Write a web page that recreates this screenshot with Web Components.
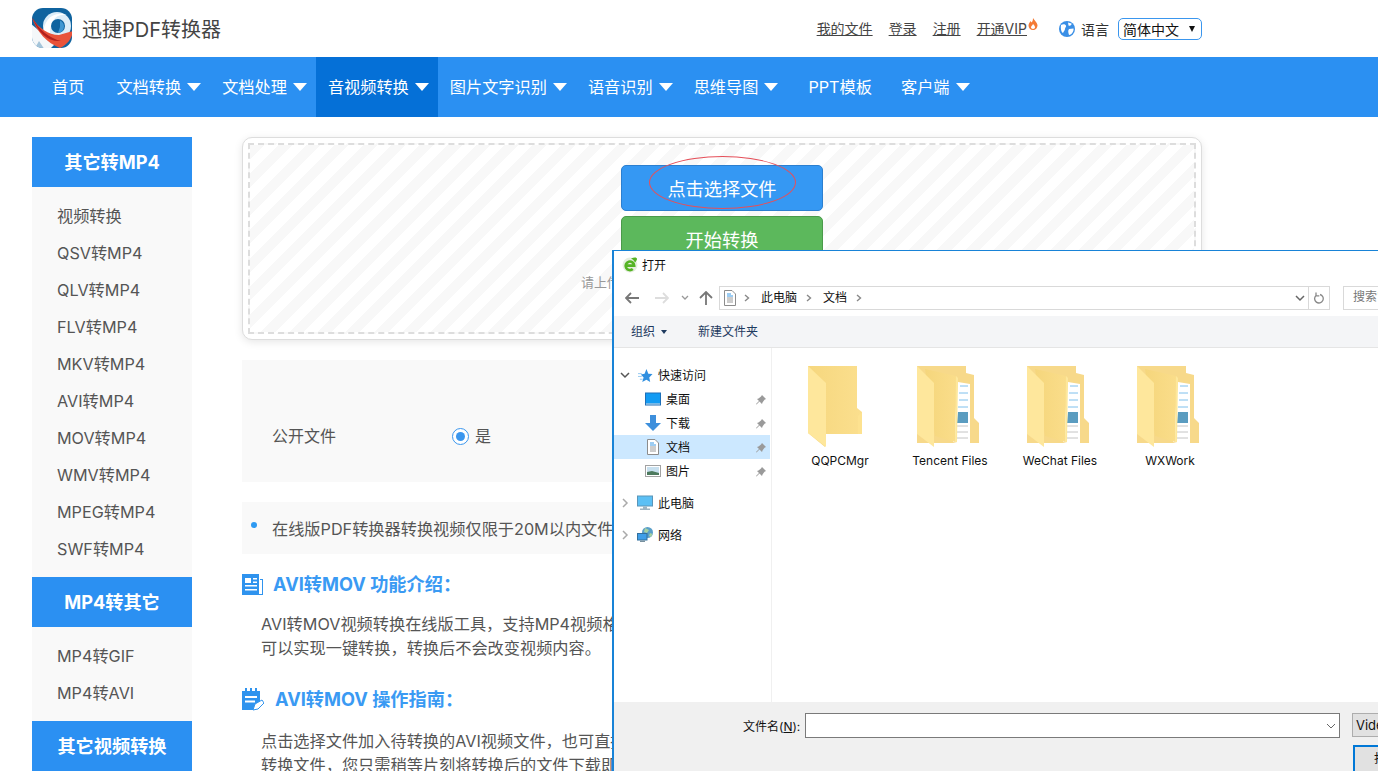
<!DOCTYPE html>
<html lang="zh">
<head>
<meta charset="UTF-8">
<title>AVI转MOV - 迅捷PDF转换器</title>
<style>
  html, body { margin: 0; height: 771px; overflow: hidden; background: #fff; }
  body { font-family: Inter, "Noto Sans CJK SC", sans-serif; position: relative; }
  page-body { margin-top: 20px; }
</style>
</head>
<body>

<site-header></site-header>

<site-nav>
  <nav-item class="home">首页</nav-item>
  <nav-item caret>文档转换</nav-item>
  <nav-item caret>文档处理</nav-item>
  <nav-item caret active>音视频转换</nav-item>
  <nav-item caret>图片文字识别</nav-item>
  <nav-item caret>语音识别</nav-item>
  <nav-item caret>思维导图</nav-item>
  <nav-item gap>PPT模板</nav-item>
  <nav-item caret>客户端</nav-item>
</site-nav>

<page-body>
  <side-menu slot="side">
    <side-group heading="其它转MP4" items="视频转换,QSV转MP4,QLV转MP4,FLV转MP4,MKV转MP4,AVI转MP4,MOV转MP4,WMV转MP4,MPEG转MP4,SWF转MP4"></side-group>
    <side-group heading="MP4转其它" items="MP4转GIF,MP4转AVI"></side-group>
    <side-group heading="其它视频转换" items="视频压缩"></side-group>
  </side-menu>

  <upload-box></upload-box>
  <option-panel></option-panel>
  <note-panel>在线版PDF转换器转换视频仅限于20M以内文件，</note-panel>

  <info-section icon="news" heading="AVI转MOV 功能介绍：">
    <span>AVI转MOV视频转换在线版工具，支持MP4视频格式</span>
    <span>可以实现一键转换，转换后不会改变视频内容。</span>
  </info-section>
  <info-section icon="note" heading="AVI转MOV 操作指南：">
    <span>点击选择文件加入待转换的AVI视频文件，也可直接</span>
    <span>转换文件，您只需稍等片刻将转换后的文件下载即可</span>
  </info-section>
</page-body>

<file-dialog>
  <tree-item chevron="down" icon="star" pad="25">快速访问</tree-item>
  <tree-item icon="desktop" indent pinned>桌面</tree-item>
  <tree-item icon="download" indent pinned>下载</tree-item>
  <tree-item icon="doc" indent pinned selected>文档</tree-item>
  <tree-item icon="picture" indent pinned>图片</tree-item>
  <tree-item chevron="right" icon="pc" class="far">此电脑</tree-item>
  <tree-item chevron="right" icon="network" class="far">网络</tree-item>
</file-dialog>

<script>
  // all the little pictures live here, <ui-icon name="..."> picks one
  const ICONS = {
    logo: `<svg viewBox="0 0 42 42"><defs><clipPath id="c"><rect x="1" y="0" width="40" height="40" rx="11"/></clipPath></defs>
      <g clip-path="url(#c)"><rect width="42" height="42" fill="#0f639f"/>
      <path d="M0 16 24 36 18 42H0Z" fill="#f4f7f9"/>
      <path d="M8 33 14 42H3Z" fill="#0f639f" opacity=".35"/>
      <circle cx="26" cy="18" r="14" fill="#dcedf8"/>
      <path d="M12 28C12 12 22 2 36 7 24 5 18 14 19 30Z" fill="#fff"/>
      <circle cx="27" cy="18" r="7" fill="#0f639f"/>
      <path d="M29 12.500a7 7 0 0 1 4 6 7 7 0 0 1-6 6.500l2-6Z" fill="#3f97d2"/>
      <path d="M1 10C8 20 17 27 28 27L42 23C41 31 36 37 29 40 16 35 6 24 1 10Z" fill="#e9533a"/>
      <path d="M1 9C8 22 18 30 30 33 17 34 7 25 1 9Z" fill="#b3211e"/></g></svg>`,
    fire: `<svg viewBox="0 0 10 12"><path d="M5 0C6 2 9 4 9.500 7 9.500 10 7.500 12 5 12S.5 10 .5 7.500C.5 5.500 2 4.500 2.500 3L3.500 4.500C4.500 3.500 5 2 5 0Z" fill="#f47a35"/><path d="M5 6C6 7 7 8 7 9.300 7 10.500 6 11 5 11S3 10.500 3 9.300C3 8 4.500 7.500 5 6Z" fill="#fff"/></svg>`,
    globe: `<svg viewBox="0 0 16 16"><circle cx="8" cy="8" r="8" fill="#3a8fe6"/><path d="M2 4C4 3 6 3 7 4.500 7.500 6 6 6.500 6 8 6 9.500 4.500 10.500 4 12 2 11 1.500 7 2 4ZM9 1.500 12.500 2.500C13 4 11 5.500 9.500 4.500ZM10 8 14.500 7.500C15 10 13 13.500 10 14 9.500 12 8.500 10 10 8Z" fill="#fff"/></svg>`,
    news: `<svg viewBox="0 0 21 21"><path d="M0 0H17V21H0Z" fill="#2f93ee"/><path d="M3 4H9V9H3ZM11 4H15V5.500H11ZM11 7.500H15V9H11ZM3 11H15V12.500H3ZM3 15H15V16.500H3Z" fill="#fff"/><path d="M18 5H21V21H13V20H20V6H18Z" fill="#2f93ee"/></svg>`,
    note: `<svg viewBox="0 0 22 23"><path d="M0 3H3V0H5V3H8V0H10V3H13V0H15V3H18V13L11 22H0Z" fill="#2f93ee"/><path d="M3 8H15V10H3ZM3 12.500H13V14.500H3Z" fill="#fff"/><path d="M11 22 13 16 20 12 22 15 16 21Z" fill="#fff" stroke="#2f93ee" stroke-width="1"/></svg>`,
    ie: `<svg viewBox="0 0 16 16"><circle cx="8" cy="8" r="7.500" fill="#e6eee0"/><path d="M3.800 8.600H12.200A4.300 4.300 0 1 0 10.800 12" fill="none" stroke="#55b324" stroke-width="2.600"/><path d="M9 1.500C12 0 15 0 15 2 15 3 14 4.500 13 5.500 12.500 4 11 2.500 9 1.500Z" fill="#55b324"/></svg>`,
    star: `<svg viewBox="0 0 16 16"><path d="M9 1 11 6 15.500 6.500 12 10 13 15 9 12.500 4.500 15 6 10 3 7 7 6Z" fill="#2f8fe0"/><path d="M0 6H4M0 9H4M2 12H5" stroke="#8fc6ef" stroke-width="1"/></svg>`,
    desktop: `<svg viewBox="0 0 16 13"><rect width="16" height="13" fill="#1d6fb8"/><rect x="1" y="1" width="14" height="10" fill="#129bf3"/><path d="M1 11H15V12H1Z" fill="#d7ecfb"/></svg>`,
    download: `<svg viewBox="0 0 16 16"><path d="M5 0H11V8H16L8 16 0 8H5Z" fill="#3d8fdc"/></svg>`,
    doc: `<svg viewBox="0 0 12 16"><path d="M.5.500H8L11.500 4V15.500H.5Z" fill="#fff" stroke="#8c8c8c"/><path d="M3 4H7M3 6H9" stroke="#3a9ae6"/><path d="M3 8H9M3 10H9M3 12H9" stroke="#9a9a9a"/></svg>`,
    picture: `<svg viewBox="0 0 16 12"><rect x=".5" y=".5" width="15" height="11" fill="#fff" stroke="#a2a2a2"/><rect x="2" y="2" width="12" height="8" fill="#c8e0ef"/><path d="M2 7 7 6 14 8V10H2Z" fill="#4d7a5e"/></svg>`,
    pc: `<svg viewBox="0 0 16 15"><rect x=".5" y=".5" width="15" height="10" fill="#5cc0f5" stroke="#5a95b8"/><path d="M6 11H10V13H6ZM3 13H13V14.500H3Z" fill="#9eb4c2"/></svg>`,
    network: `<svg viewBox="0 0 16 16"><circle cx="10.500" cy="5.500" r="5.500" fill="#5a9fc9"/><path d="M8 1 12 3 10 6 7 5ZM13 6 15.500 7 14 10 12 9Z" fill="#a6d2a2"/><rect x=".5" y="6.500" width="9.500" height="6.500" fill="#3f9ee8" stroke="#33709e"/><path d="M3 13.500H8V15H3Z" fill="#78909e"/></svg>`,
    pin: `<svg viewBox="0 0 10 10"><path d="M6 0 10 4 8.500 4.800 6.500 7.500 6 9 3.500 6.500.5 9.500 0 9 3 6 1 4 2.500 3.500 5 1.500Z" fill="#9a9a9a"/></svg>`,
    folder: `<svg viewBox="0 0 56 84"><defs>
        <linearGradient id="b" x1="0" x2="1"><stop offset="0" stop-color="#f6d77e"/><stop offset="1" stop-color="#fbdf8e"/></linearGradient></defs>
      <path d="M0 0H49V42L54 46V68H17V81L0 67Z" fill="url(#b)"/>
      <path d="M0 0 18 17V81L0 67Z" fill="#fee79c"/>
      <path d="M54 46V68H50V50Z" fill="#fde290"/></svg>`,
    files: `<svg viewBox="0 0 62 84"><defs>
        <linearGradient id="f" x1="0" x2="1"><stop offset="0" stop-color="#f5d67c"/><stop offset="1" stop-color="#fadd8a"/></linearGradient></defs>
      <path d="M0 0H49V7L57 9V52L62 57V77H0Z" fill="#f7d98a"/>
      <path d="M41 16 53 18V80L36 76Z" fill="#fff"/>
      <path d="M43 20H51M42 27H51M42 34H51M41 41H51" stroke="#7fc0ec" stroke-width="1"/>
      <path d="M40 60H51M39 66H51M39 72H51" stroke="#c4c4c4" stroke-width="1"/>
      <path d="M41 46H51V57H40Z" fill="#5a9cc0"/>
      <path d="M8 3 39 10 38 76 18 70Z" fill="url(#f)"/>
      <path d="M38 76 39 10 41 12 40 76Z" fill="#fde79b"/>
      <path d="M0 0 17 17V81L0 68Z" fill="#fee79c"/></svg>`
  };

  class UiIcon extends HTMLElement {
    connectedCallback() {
      this.attachShadow({ mode: 'open' });
      this.shadowRoot.innerHTML = `<style>
        :host { display: inline-flex; flex: none; }
        svg { display: block; width: 100%; height: 100%; }
      </style>${ICONS[this.getAttribute('name')] || ''}`;
    }
  }

  class SiteHeader extends HTMLElement {
    constructor() {
      super();
      this.attachShadow({ mode: 'open' });
      this.shadowRoot.innerHTML = `<style>
        :host { display: flex; align-items: center; height: 57px; width: 1202px; padding-left: 31px; box-sizing: border-box; color: #333; }
        .logo { width: 42px; height: 42px; margin-right: 9px; }
        .name { font-size: 20px; color: #444; }
        .links { margin-left: auto; display: flex; align-items: center; font-size: 14px; }
        a { color: #444; text-decoration: underline; margin-right: 16px; line-height: 20px; }
        a.vip { margin-right: 0; }
        .fire { width: 10px; height: 12px; margin: -10px 21px 0 1px; }
        .globe { width: 16px; height: 16px; margin-right: 6px; }
        .lang { margin-right: 9px; }
        .select { width: 84px; height: 22px; box-sizing: border-box; border: 1px solid #3a96ee; border-radius: 5px; color: #111;
          display: flex; align-items: center; padding-left: 4px; position: relative; }
        .select i { width: 0; height: 0; border: 3.5px solid transparent; border-top: 6px solid #111; border-bottom: 0; position: absolute; right: 6px; top: 7px; }
      </style>
      <ui-icon class="logo" name="logo"></ui-icon>
      <span class="name">迅捷PDF转换器</span>
      <div class="links">
        <a>我的文件</a><a>登录</a><a>注册</a><a class="vip">开通VIP</a>
        <ui-icon class="fire" name="fire"></ui-icon>
        <ui-icon class="globe" name="globe"></ui-icon>
        <span class="lang">语言</span>
        <div class="select">简体中文<i></i></div>
      </div>`;
    }
  }

  class SiteNav extends HTMLElement {
    constructor() {
      super();
      this.attachShadow({ mode: 'open' });
      this.shadowRoot.innerHTML = `<style>
        :host { display: flex; height: 60px; background: #2b90f2; padding-left: 40px; }
      </style><slot></slot>`;
    }
  }

  class NavItem extends HTMLElement {
    constructor() {
      super();
      this.attachShadow({ mode: 'open' });
      this.shadowRoot.innerHTML = `<style>
        :host { display: flex; align-items: center; padding: 0 20px 2px 12px; color: #fff; font-size: 16.200px; }
        :host([caret]) { padding-right: 9px; }
        :host([active]) { background: #0570d7; }
        :host([gap]) { margin-left: 9px; padding-right: 17px; }
        i { display: none; width: 0; height: 0; margin: 2px 0 0 6px; border: 7.5px solid transparent; border-top: 8px solid #fff; border-bottom: 0; }
        :host([caret]) i { display: block; }
      </style><slot></slot><i></i>`;
    }
  }

  class PageBody extends HTMLElement {
    constructor() {
      super();
      this.attachShadow({ mode: 'open' });
      this.shadowRoot.innerHTML = `<style>
        :host { display: grid; grid-template-columns: 160px 960px; column-gap: 50px; padding-left: 32px; align-items: start; }
        .main { display: flex; flex-direction: column; min-width: 0; }
      </style>
      <slot name="side"></slot>
      <div class="main"><slot></slot></div>`;
    }
  }

  class SideMenu extends HTMLElement {
    constructor() {
      super();
      this.attachShadow({ mode: 'open' });
      this.shadowRoot.innerHTML = `<style>:host { display: block; }</style><slot></slot>`;
    }
  }

  class SideGroup extends HTMLElement {
    connectedCallback() {
      const items = this.getAttribute('items').split(',').map(t => `<li>${t}</li>`).join('');
      this.attachShadow({ mode: 'open' });
      this.shadowRoot.innerHTML = `<style>
        :host { display: block; }
        h3 { margin: 0; height: 50px; line-height: 50px; text-align: center; background: #2b90f2; color: #fff; font-size: 18.200px; font-weight: 700; }
        ul { margin: 0; padding: 11px 0 9px; list-style: none; background: #f9f9f9; }
        li { height: 37px; line-height: 37px; padding-left: 25px; font-size: 16.200px; color: #555; }
      </style><h3>${this.getAttribute('heading')}</h3><ul>${items}</ul>`;
    }
  }

  class UploadBox extends HTMLElement {
    constructor() {
      super();
      this.attachShadow({ mode: 'open' });
      this.shadowRoot.innerHTML = `<style>
        :host { display: block; height: 203px; box-sizing: border-box; padding: 5px; border: 1px solid #ddd; border-radius: 10px; background: #fff; box-shadow: 0 2px 8px rgba(0,0,0,.1); }
        .drop { height: 100%; box-sizing: border-box; border: 2px dashed #ddd; display: flex; flex-direction: column; align-items: center; padding-top: 20px; position: relative;
          background: repeating-linear-gradient(135deg, #f8f8f8 0 10px, #fff 10px 20px); }
        button { width: 202px; height: 46px; box-sizing: border-box; border-radius: 5px; border: 1px solid #2b7fd0; background: #3598f3; color: #fff; font: 18.200px Inter, "Noto Sans CJK SC", sans-serif; flex: none; }
        button.go { margin-top: 5px; background: #5cb85c; border-color: #4a9a4a; }
        p { margin: 10px 0 0; padding-left: 6px; font-size: 13px; color: #999; }
        .mark { position: absolute; left: 399px; top: 11px; width: 147px; height: 53px; box-sizing: border-box; border: 1px solid #e5505a; border-radius: 50%; }
      </style>
      <div class="drop">
        <button>点击选择文件</button>
        <button class="go">开始转换</button>
        <p>请上传需要转换的视频文件，文件大小不超过20M</p>
        <div class="mark"></div>
      </div>`;
    }
  }

  class OptionPanel extends HTMLElement {
    constructor() {
      super();
      this.attachShadow({ mode: 'open' });
      this.shadowRoot.innerHTML = `<style>
        :host { display: flex; align-items: center; margin-top: 20px; height: 122px; padding: 30px 0 0 30px; box-sizing: border-box; background: #f9f9f9; font-size: 16px; color: #555; }
        .label { width: 180px; margin-bottom: 2px; }
        .text { margin-bottom: 2px; }
        .radio { width: 17px; height: 17px; box-sizing: border-box; border: 1px solid #3a96ee; border-radius: 50%; background: #fff; display: grid; place-items: center; margin-right: 6px; }
        .radio i { width: 9px; height: 9px; border-radius: 50%; background: #3a96ee; }
      </style>
      <span class="label">公开文件</span><span class="radio"><i></i></span><span class="text">是</span>`;
    }
  }

  class NotePanel extends HTMLElement {
    constructor() {
      super();
      this.attachShadow({ mode: 'open' });
      this.shadowRoot.innerHTML = `<style>
        :host { display: flex; align-items: center; margin-top: 20px; height: 52px; padding-left: 30px; background: #f9f9f9; font-size: 16.200px; color: #555; position: relative; white-space: nowrap; }
        i { position: absolute; left: 9px; top: 20px; width: 6px; height: 6px; border-radius: 50%; background: #2e9af2; }
      </style><i></i><slot></slot>`;
    }
  }

  class InfoSection extends HTMLElement {
    connectedCallback() {
      this.attachShadow({ mode: 'open' });
      this.shadowRoot.innerHTML = `<style>
        :host { display: block; margin-top: 15px; }
        h2 { margin: 0; height: 30px; display: flex; align-items: center; gap: 10px; font-size: 18.200px; font-weight: 700; color: #3a9af3; }
        h2 span { margin-bottom: 2px; }
        ui-icon { width: 21px; height: 21px; }
        :host([icon=note]) ui-icon { width: 22px; height: 23px; margin-right: 1px; }
        .body { margin: 13px 0 0 19px; display: flex; flex-direction: column; font-size: 16.200px; line-height: 24px; color: #555; white-space: nowrap; }
        :host([icon=note]) .body { margin-top: 15px; }
        :host([icon=note]) { margin-top: 24px; }
        ::slotted(span) { display: block; }
      </style>
      <h2><ui-icon name="${this.getAttribute('icon')}"></ui-icon><span>${this.getAttribute('heading')}</span></h2>
      <div class="body"><slot></slot></div>`;
    }
  }

  class TreeItem extends HTMLElement {
    connectedCallback() {
      const chevron = this.getAttribute('chevron');
      const pts = chevron == 'down' ? 'M1 3 5 7 9 3' : 'M3 1 7 5 3 9';
      const col = chevron == 'down' ? '#555' : '#aaa';
      this.attachShadow({ mode: 'open' });
      this.shadowRoot.innerHTML = `<style>
        :host { display: flex; align-items: center; height: 24px; width: 156px; font-size: 12px; color: #111; padding-left: 6px; box-sizing: border-box; position: relative; }
        :host([selected]) { background: #cce8ff; }
        :host(.far) { margin-top: 8px; }
        slot { display: block; margin-bottom: 2px; }
        .chev { width: 10px; height: 10px; margin-right: 8px; flex: none; }
        .ico { width: 15px; height: 15px; margin-right: 5px; }
        :host([indent]) { padding-left: 31px; }
        :host([indent]) .ico { width: 16px; height: 16px; margin-right: 5px; }
        :host(.far) .ico { width: 16px; height: 16px; margin-left: -1px; }
        .pin { position: absolute; right: 4px; top: 8px; width: 10px; height: 10px; }
      </style>
      ${chevron ? `<svg class="chev" viewBox="0 0 10 10"><path d="${pts}" fill="none" stroke="${col}" stroke-width="1.500"/></svg>` : ''}
      <ui-icon class="ico" name="${this.getAttribute('icon')}"></ui-icon><slot></slot>
      ${this.hasAttribute('pinned') ? '<ui-icon class="pin" name="pin"></ui-icon>' : ''}`;
    }
  }

  class FileTile extends HTMLElement {
    connectedCallback() {
      const plain = this.hasAttribute('plain');
      this.attachShadow({ mode: 'open' });
      this.shadowRoot.innerHTML = `<style>
        :host { display: flex; flex-direction: column; align-items: center; width: 110px; font-size: 12px; color: #111; }
        ui-icon { height: 84px; width: ${plain ? 56 : 62}px; margin-left: ${plain ? -9 : -4}px; }
        span { margin-top: 3px; line-height: 16px; white-space: nowrap; }
      </style><ui-icon name="${plain ? 'folder' : 'files'}"></ui-icon><span>${this.getAttribute('label')}</span>`;
    }
  }

  // the open-file window lies over the page, its tree comes in through the slot
  class FileDialog extends HTMLElement {
    constructor() {
      super();
      this.attachShadow({ mode: 'open' });
      this.shadowRoot.innerHTML = `<style>
        :host { position: absolute; left: 612px; top: 250px; width: 900px; height: 600px; box-sizing: border-box; background: #fff;
          border: 1px solid #1883d7; border-left-width: 2px; display: flex; flex-direction: column; font-size: 12px; color: #111; }
        .title { height: 28px; display: flex; align-items: center; padding-left: 8px; flex: none; }
        .title ui-icon { width: 16px; height: 16px; margin-right: 4px; }
        .lift { margin-bottom: 2px; }
        .tools { height: 37px; flex: none; display: flex; align-items: center; position: relative; box-sizing: border-box; }
        .tools > svg { flex: none; }
        .crumb { margin-left: 6px; width: 611px; height: 24px; box-sizing: border-box; border: 1px solid #d9d9d9; display: flex; align-items: center; padding-left: 4px; flex: none; }
        .crumb ui-icon { width: 12px; height: 16px; margin-right: 7px; }
        .crumb .sep { width: 8px; height: 8px; margin-right: 10px; flex: none; }
        .crumb span { margin-right: 8px; }
        .end { margin-left: auto; display: flex; align-items: center; height: 100%; }
        .end .drop { width: 10px; height: 10px; margin-right: 3px; }
        .end .ref { border-left: 1px solid #d9d9d9; height: 100%; width: 20px; display: grid; place-items: center; }
        .search { margin-left: 13px; width: 200px; height: 24px; box-sizing: border-box; border: 1px solid #d9d9d9; padding-left: 9px; line-height: 20px; color: #777; }
        .cmd { height: 32px; flex: none; box-sizing: border-box; background: #f4f5f7; border-bottom: 1px solid #e5e5e5; display: flex; align-items: center; padding-left: 17px; color: #1e3a5f; }
        .cmd i { width: 0; height: 0; border: 3.500px solid transparent; border-top: 4px solid #1e3a5f; border-bottom: 0; margin: 0 31px 0 6px; }
        .panes { height: 354px; flex: none; display: flex; }
        .tree { width: 158px; flex: none; box-sizing: border-box; padding-top: 15px; border-right: 1px solid #f0f0f0; }
        .files { display: flex; padding: 18px 0 0 13px; }
        .foot { flex: 1; background: #f0f0f0; display: grid; grid-template-columns: 535px 1fr; column-gap: 12px; padding: 11px 0 0 191px; align-content: start; row-gap: 7px; position: relative; }
        .name { display: flex; align-items: center; width: 535px; height: 25px; grid-column: 1; position: relative; }
        .name label { position: absolute; left: -62px; white-space: nowrap; }
        .input { width: 535px; height: 25px; box-sizing: border-box; border: 1px solid #7a7a7a; background: #fff; display: flex; justify-content: flex-end; align-items: center; padding-right: 3px; }
        .type { height: 24px; box-sizing: border-box; width: 160px; border: 1px solid #adadad; background: #e1e1e1; padding-left: 3px; line-height: 22px; font-size: 13px; }
        .open { grid-column: 2; margin-left: 1px; width: 100px; height: 30px; box-sizing: border-box; border: 2px solid #0078d7; background: #e1e1e1; padding-left: 19px; line-height: 24px; }
      </style>
      <div class="title"><ui-icon name="ie"></ui-icon><span class="lift">打开</span></div>
      <div class="tools">
        <svg width="14" height="12" viewBox="0 0 14 12" style="margin-left:11px"><path d="M6 1 1 6 6 11M1 6H14" fill="none" stroke="#777" stroke-width="1.800"/></svg>
        <svg width="14" height="12" viewBox="0 0 14 12" style="margin-left:16px"><path d="M8 1 13 6 8 11M13 6H0" fill="none" stroke="#ddd" stroke-width="1.800"/></svg>
        <svg width="8" height="6" viewBox="0 0 8 6" style="margin-left:12px"><path d="M1 1 4 4 7 1" fill="none" stroke="#999" stroke-width="1.300"/></svg>
        <svg width="14" height="14" viewBox="0 0 14 14" style="margin-left:10px"><path d="M1 7 7 1 13 7M7 1V14" fill="none" stroke="#777" stroke-width="1.800"/></svg>
        <div class="crumb">
          <ui-icon name="doc"></ui-icon>
          <svg class="sep" viewBox="0 0 8 8"><path d="M2 1 5.500 4 2 7" fill="none" stroke="#888" stroke-width="1.400"/></svg>
          <span class="lift">此电脑</span>
          <svg class="sep" viewBox="0 0 8 8"><path d="M2 1 5.500 4 2 7" fill="none" stroke="#888" stroke-width="1.400"/></svg>
          <span class="lift">文档</span>
          <svg class="sep" viewBox="0 0 8 8"><path d="M2 1 5.500 4 2 7" fill="none" stroke="#888" stroke-width="1.400"/></svg>
          <div class="end">
            <svg class="drop" viewBox="0 0 10 10"><path d="M1 3 5 7 9 3" fill="none" stroke="#666" stroke-width="1.500"/></svg>
            <div class="ref"><svg width="12" height="12" viewBox="0 0 12 12"><path d="M7 2.500A4.300 4.300 0 1 1 3 3.500M3 .5V3.800H6.300" fill="none" stroke="#888" stroke-width="1.300"/></svg></div>
          </div>
        </div>
        <div class="search">搜索"文档"</div>
      </div>
      <div class="cmd"><span class="lift">组织</span><i></i><span class="lift">新建文件夹</span></div>
      <div class="panes">
        <div class="tree"><slot></slot></div>
        <div class="files">
          <file-tile plain label="QQPCMgr"></file-tile>
          <file-tile label="Tencent Files"></file-tile>
          <file-tile label="WeChat Files"></file-tile>
          <file-tile label="WXWork"></file-tile>
        </div>
      </div>
      <div class="foot">
        <div class="name"><label>文件名(<u>N</u>):</label>
          <div class="input"><svg width="10" height="10" viewBox="0 0 10 10"><path d="M1 3 5 7 9 3" fill="none" stroke="#666" stroke-width="1"/></svg></div>
        </div>
        <div class="type">Video Files</div>
        <div class="open">打开(O)</div>
      </div>`;
    }
  }

  customElements.define('ui-icon', UiIcon);
  customElements.define('site-header', SiteHeader);
  customElements.define('site-nav', SiteNav);
  customElements.define('nav-item', NavItem);
  customElements.define('page-body', PageBody);
  customElements.define('side-menu', SideMenu);
  customElements.define('side-group', SideGroup);
  customElements.define('upload-box', UploadBox);
  customElements.define('option-panel', OptionPanel);
  customElements.define('note-panel', NotePanel);
  customElements.define('info-section', InfoSection);
  customElements.define('tree-item', TreeItem);
  customElements.define('file-tile', FileTile);
  customElements.define('file-dialog', FileDialog);
</script>
</body>
</html>
